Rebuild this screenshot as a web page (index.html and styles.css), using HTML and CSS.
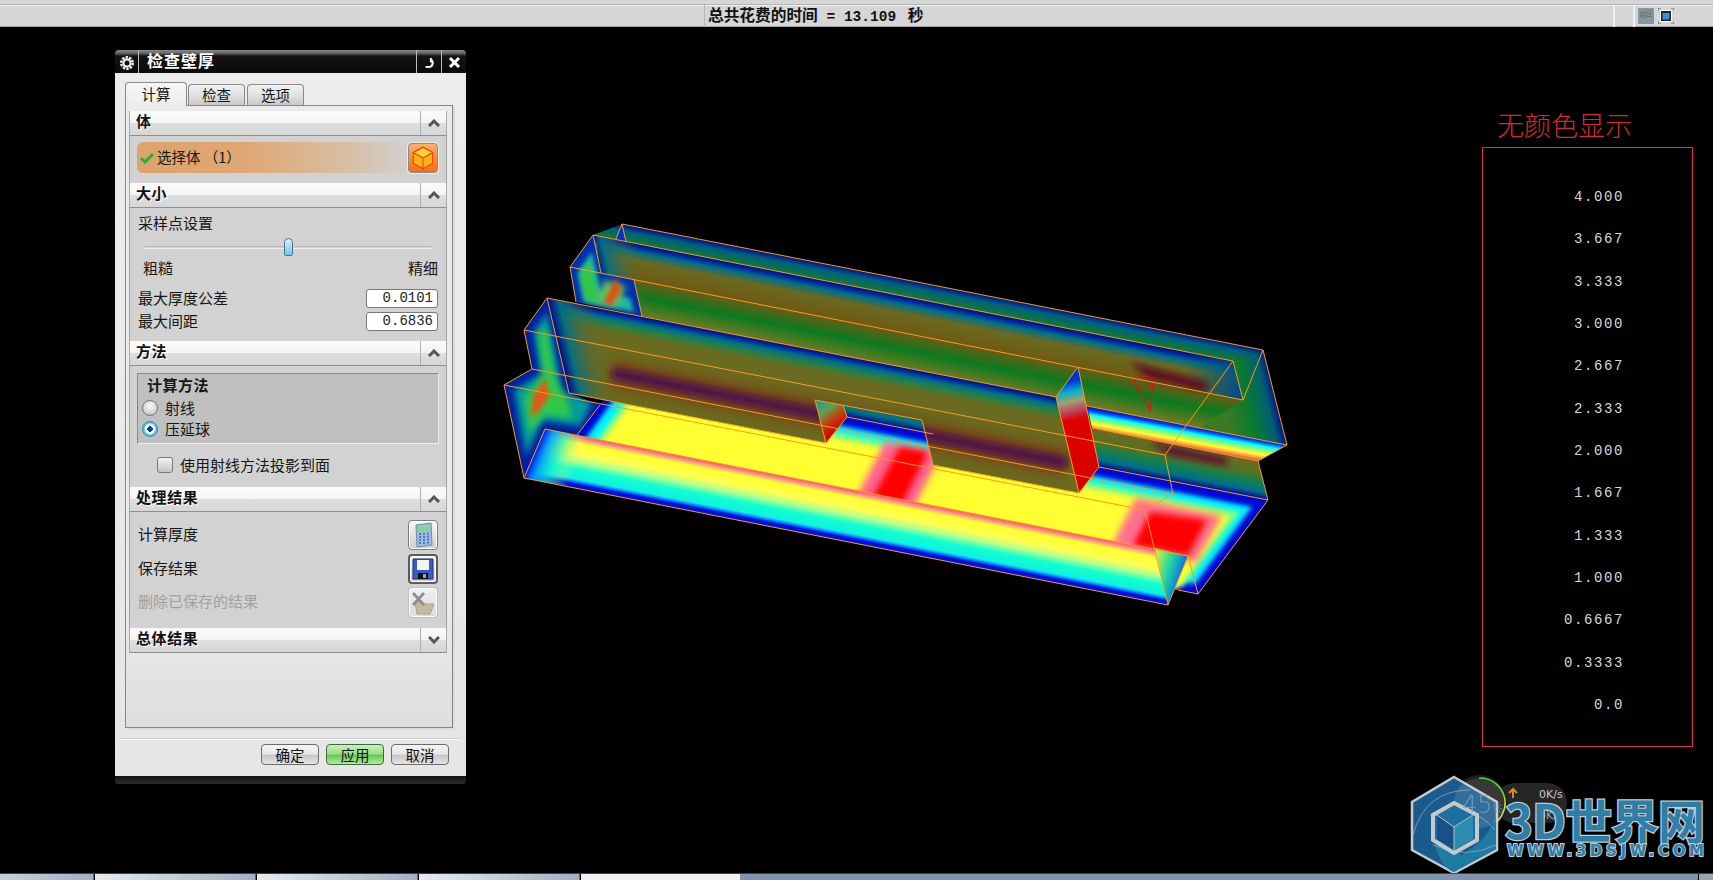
FILE: index.html
```html
<!DOCTYPE html>
<html lang="zh">
<head>
<meta charset="utf-8">
<title>检查壁厚</title>
<link rel="stylesheet" href="styles.css">
</head>
<body>
<header class="topbar">
  <div class="topbar-line"></div>
  <div class="topbar-row">
    <div class="cell-left"></div>
    <div class="cell-status">总共花费的时间<span class="mono"> = 13.109 </span>秒</div>
    <div class="cell-small"></div>
    <div class="cell-icons">
      <svg class="flag" width="16" height="16" viewBox="0 0 16 16"><rect width="16" height="16" fill="#7f98a4"/><path d="M2 3 L13 2 L14 11 L4 12Z" fill="#9a9a9a"/><path d="M4 3v9M7 3v9M10 2v9M13 2v9M2 5h12M2 8h12" stroke="#666" stroke-width="1.4" stroke-dasharray="1.5 1.5"/></svg>
      <svg class="win" width="16" height="16" viewBox="0 0 16 16"><path d="M0 3V0H3M13 0H16V3M16 13V16H13M3 16H0V13" fill="none" stroke="#666"/><rect x="2" y="2" width="12" height="12" fill="#fff"/><rect x="3" y="3" width="10" height="10" fill="#222"/><rect x="4.500" y="5" width="7" height="6.500" fill="#3f8ae8"/></svg>
    </div>
  </div>
</header>

<main class="viewport">
  <svg class="scene" width="1713" height="846" viewBox="0 27 1713 846">
    <defs>
      <filter id="b2" x="-30%" y="-30%" width="160%" height="160%"><feGaussianBlur stdDeviation="2"/></filter>
      <filter id="b3" x="-30%" y="-30%" width="160%" height="160%"><feGaussianBlur stdDeviation="3"/></filter>
      <filter id="b4" x="-30%" y="-30%" width="160%" height="160%"><feGaussianBlur stdDeviation="3.500"/></filter>
      <filter id="b6" x="-30%" y="-100%" width="160%" height="300%"><feGaussianBlur stdDeviation="6"/></filter>
      <linearGradient id="gBack" gradientUnits="userSpaceOnUse" x1="622" y1="224" x2="618.800" y2="240.400">
        <stop offset="0" stop-color="#000a90"/><stop offset=".4" stop-color="#006080"/><stop offset="1" stop-color="#107a30"/>
      </linearGradient>
      <linearGradient id="gSecond" gradientUnits="userSpaceOnUse" x1="593" y1="235" x2="579.500" y2="303.300">
        <stop offset="0" stop-color="#000a90"/><stop offset=".05" stop-color="#0028a0"/><stop offset=".12" stop-color="#007088"/><stop offset=".24" stop-color="#6a6a20"/><stop offset=".5" stop-color="#6f5a14"/><stop offset=".75" stop-color="#0a7a20"/><stop offset="1" stop-color="#6a7a20"/>
      </linearGradient>
      <linearGradient id="gThird" gradientUnits="userSpaceOnUse" x1="547" y1="298" x2="530" y2="385.400">
        <stop offset="0" stop-color="#000a90"/><stop offset=".03" stop-color="#0020a0"/><stop offset=".09" stop-color="#007088"/><stop offset=".16" stop-color="#2a8040"/><stop offset=".24" stop-color="#6a6a20"/><stop offset="1" stop-color="#6a6a20"/>
      </linearGradient>
      <linearGradient id="gLeftNavy" gradientUnits="userSpaceOnUse" x1="557" y1="340" x2="600" y2="330">
        <stop offset="0" stop-color="#000a90"/><stop offset=".25" stop-color="#007088" stop-opacity=".9"/><stop offset="1" stop-color="#6a6a20" stop-opacity="0"/>
      </linearGradient>
      <linearGradient id="gLeftNavy2" gradientUnits="userSpaceOnUse" x1="600" y1="280" x2="643" y2="270">
        <stop offset="0" stop-color="#000a90"/><stop offset=".25" stop-color="#007088" stop-opacity=".9"/><stop offset="1" stop-color="#6a6a20" stop-opacity="0"/>
      </linearGradient>
      <linearGradient id="gEndRight" gradientUnits="userSpaceOnUse" x1="1225" y1="407" x2="1276" y2="395">
        <stop offset="0" stop-color="#3a7a20"/><stop offset=".45" stop-color="#0a7a30"/><stop offset=".8" stop-color="#006070"/><stop offset="1" stop-color="#00108a"/>
      </linearGradient>
      <linearGradient id="gEndLeft" gradientUnits="userSpaceOnUse" x1="1185" y1="370" x2="1240" y2="380">
        <stop offset="0" stop-color="#006070" stop-opacity="0"/><stop offset="1" stop-color="#00508a"/>
      </linearGradient>
      <linearGradient id="gStrip" gradientUnits="userSpaceOnUse" x1="1087" y1="406" x2="1083" y2="428">
        <stop offset="0" stop-color="#0008b0"/><stop offset=".18" stop-color="#0040ff"/><stop offset=".36" stop-color="#00ffff"/><stop offset=".55" stop-color="#90ff70"/><stop offset=".75" stop-color="#ffff30"/><stop offset=".92" stop-color="#ff9040"/><stop offset="1" stop-color="#ff5060"/>
      </linearGradient>
      <linearGradient id="gMid" gradientUnits="userSpaceOnUse" x1="1092" y1="428" x2="1084.600" y2="465.500">
        <stop offset="0" stop-color="#6a6a20"/><stop offset=".3" stop-color="#5a7020"/><stop offset=".55" stop-color="#108050"/><stop offset=".78" stop-color="#007088"/><stop offset=".94" stop-color="#001898"/><stop offset="1" stop-color="#000a90"/>
      </linearGradient>
      <linearGradient id="gFront" gradientUnits="userSpaceOnUse" x1="545" y1="429" x2="535.720" y2="476">
        <stop offset="0" stop-color="#ff4a70"/><stop offset=".07" stop-color="#ff9090"/><stop offset=".16" stop-color="#ffff30"/><stop offset=".38" stop-color="#ffff50"/><stop offset=".54" stop-color="#b0ff90"/><stop offset=".7" stop-color="#10ffd0"/><stop offset=".9" stop-color="#10f0e0"/><stop offset=".95" stop-color="#0090ff"/><stop offset="1" stop-color="#0010e0"/>
      </linearGradient>
      <linearGradient id="gFrontLeft" gradientUnits="userSpaceOnUse" x1="535" y1="453" x2="575" y2="470">
        <stop offset="0" stop-color="#0020f0"/><stop offset=".2" stop-color="#00a0ff" stop-opacity=".95"/><stop offset=".5" stop-color="#10f0d0" stop-opacity=".7"/><stop offset="1" stop-color="#ffff50" stop-opacity="0"/>
      </linearGradient>
      <linearGradient id="gCapFront" gradientUnits="userSpaceOnUse" x1="1155" y1="560" x2="1188" y2="570">
        <stop offset="0" stop-color="#c0f050"/><stop offset=".45" stop-color="#20d8a0"/><stop offset="1" stop-color="#0050ff"/>
      </linearGradient>
      <linearGradient id="gEndThird" gradientUnits="userSpaceOnUse" x1="1067" y1="382" x2="1089" y2="480">
        <stop offset="0" stop-color="#0030e0"/><stop offset=".1" stop-color="#00b0d0"/><stop offset=".2" stop-color="#a0a070"/><stop offset=".3" stop-color="#c04060"/><stop offset=".38" stop-color="#e00000"/><stop offset="1" stop-color="#d80000"/>
      </linearGradient>
      <linearGradient id="gNotch" gradientUnits="userSpaceOnUse" x1="818" y1="400" x2="840" y2="430">
        <stop offset="0" stop-color="#10a0a0"/><stop offset=".35" stop-color="#60a050"/><stop offset=".65" stop-color="#c04010"/><stop offset="1" stop-color="#d00000"/>
      </linearGradient>
      <clipPath id="cSecond"><polygon points="593,235 1233,361 1263,350 1287,445 1087,406 642,316 634,280 601,273"/></clipPath>
      <clipPath id="cCap2"><polygon points="570,267 593,235 601,273 634,280 642,316 576,302"/></clipPath>
      <clipPath id="cCap3"><polygon points="547,298 524,330 532,369 504,385 524,478 545,429 577,435 600,405 569,393"/></clipPath>
      <clipPath id="cMid"><polygon points="700,351 1258,461 1268,500 700,388"/></clipPath>
      <clipPath id="cFloor"><polygon points="623,373 1268,500 1198,594 554,467"/></clipPath>
      <clipPath id="cThird"><polygon points="547,298 1056,397 1079,493 933,465 922,420 815,400 826,443 569,393"/></clipPath>
    </defs>

    <polygon points="622,224 1263,350 1233,361 593,235" fill="url(#gBack)"/>
    <polygon points="622,224 616,239 626,242" fill="#0030d0"/>

    <polygon points="593,235 1233,361 1243,400 1287,445 1087,406 642,316 634,280 601,273" fill="url(#gSecond)"/>
    <g clip-path="url(#cSecond)">
      <polygon points="596,236 646,246 654,322 604,312" fill="url(#gLeftNavy2)"/>
      <polygon points="1180,351 1233,361 1243,400 1190,390" fill="url(#gEndLeft)"/>
      <polygon points="1130,362 1207,382 1207,392 1147,378" fill="#5f0820" filter="url(#b3)"/>
    </g>
    <polygon points="1233,361 1263,350 1287,445 1200,428 1243,400" fill="url(#gEndRight)"/>

    <polygon points="570,267 593,235 601,273 634,280 642,316 576,302" fill="#0030b0"/>
    <g clip-path="url(#cCap2)">
      <polygon points="578,272 592,252 600,290 630,298 634,312 584,302" fill="#20b8a0" filter="url(#b2)"/>
      <polygon points="580,276 590,262 597,292 602,304 586,300" fill="#30c840" filter="url(#b3)"/>
      <polygon points="604,280 626,286 618,306 596,302" fill="#60c060" filter="url(#b3)"/>
      <polygon points="616,278 621,290 611,306 604,302" fill="#e05010" filter="url(#b2)"/>
    </g>

    <polygon points="1087,406 1287,445 1258,461 1092,428" fill="url(#gStrip)"/>
    <polygon points="700,351 1258,461 1268,500 700,388" fill="url(#gMid)"/>
    <g clip-path="url(#cMid)">
      <polygon points="1150,442 1227,458 1227,466 1170,455" fill="#5a0a30" filter="url(#b3)"/>
    </g>

    <polygon points="623,373 1268,500 1198,594 554,467" fill="#0008d8"/>
    <g clip-path="url(#cFloor)">
      <polygon points="626,383 1252,507 1195,584 570,460" fill="#00f0ff" filter="url(#b2)"/>
      <polygon points="632,392 1240,512 1183,587 576,468" fill="#80ff80" filter="url(#b2)"/>
      <polygon points="634,399 1230,516 1176,590 580,472" fill="#ffff33" filter="url(#b2)"/>
      <polygon points="1136,498 1222,516 1196,562 1112,545" fill="#ff7090" filter="url(#b4)"/>
      <polygon points="1150,512 1207,520 1188,556 1133,545" fill="#ff0000" filter="url(#b3)"/>
      <polygon points="885,442 942,452 912,510 856,498" fill="#ff6090" filter="url(#b4)"/>
      <polygon points="900,447 928,452 902,504 872,498" fill="#ff0000" filter="url(#b3)"/>
    </g>

    <polygon points="547,298 1056,397 1079,493 933,465 922,420 815,400 826,443 569,393" fill="url(#gThird)"/>
    <g clip-path="url(#cThird)">
      <polygon points="547,298 607,310 629,400 569,393" fill="url(#gLeftNavy)"/>
      <line x1="612" y1="373" x2="1067" y2="463" stroke="#7a4012" stroke-width="26" filter="url(#b6)"/>
      <line x1="612" y1="373" x2="1067" y2="463" stroke="#4a0a50" stroke-width="10" filter="url(#b4)"/>
    </g>
    <polygon points="815,400 843,405 847,417 826,443" fill="url(#gNotch)"/>
    <polygon points="1056,397 1078,367 1099,467 1079,493" fill="url(#gEndThird)"/>

    <polygon points="547,298 524,330 532,369 504,385 524,478 545,429 577,435 600,405 569,393" fill="#0020a0"/>
    <g clip-path="url(#cCap3)">
      <polygon points="547,312 534,332 541,374 514,390 526,456 542,420 580,426 592,402 562,392" fill="#009c9c" filter="url(#b3)"/>
      <polygon points="546,326 538,336 544,374 524,398 529,434 545,415 572,418 568,402 556,380" fill="#30c848" filter="url(#b3)"/>
      <polygon points="545,378 533,396 531,418 540,410 550,395" fill="#e05a18" filter="url(#b2)"/>
    </g>

    <polygon points="545,429 1188,556 1168,605 524,478" fill="url(#gFront)"/>
    <polygon points="545,429 595,439 574,488 524,478" fill="url(#gFrontLeft)"/>
    <polygon points="1155,548 1188,556 1168,605" fill="url(#gCapFront)"/>

    <ellipse cx="1144" cy="382" rx="9.500" ry="6" fill="none" stroke="#e01010" stroke-width="1.200"/>
    <path d="M1135 385 L1150 410 L1153 382" fill="none" stroke="#e01010" stroke-width="1.200"/>

    <path class="wire" d="M622 224L1263 350M593 235L1233 361M570 267L1243 400M547 298L1056 397M524 330L1165 455M532 369L1173 494M504 385L1145 510M545 429L1188 556M524 478L1168 605M569 393L826 443M933 465L1079 493M1087 406L1287 445M1092 428L1258 461M847 417L933 434M1099 467L1268 500M815 400L922 420M815 400L826 443M922 420L933 465M847 417L843 405M847 417L826 443M1056 397L1078 367L1099 467L1079 493L1056 397M622 224L616 239M622 224L626 242M593 235L570 267L576 302M593 235L601 273M634 280L642 316M547 298L524 330L532 369L504 385L524 478L545 429M547 298L569 393M577 435L600 405M1233 361L1243 400L1263 350L1287 445L1258 461L1268 500L1198 594L1178 590M1233 361L1165 455L1173 494L1145 510L1168 605L1188 556L1198 594"/>
  </svg>

  <section class="dialog">
    <div class="titlebar">
      <div class="tb-cell tb-gear">
        <svg width="14" height="14" viewBox="0 0 14 14"><circle cx="7" cy="7" r="5.800" fill="none" stroke="#eee" stroke-width="2.400" stroke-dasharray="2.400 1.200"/><circle cx="7" cy="7" r="3.600" fill="none" stroke="#eee" stroke-width="2.200"/></svg>
      </div>
      <div class="tb-title">检查壁厚</div>
      <div class="tb-cell tb-btn">
        <svg width="12" height="12" viewBox="0 0 12 12"><path d="M2.500 10 H6.500 A4 4 0 0 0 8 2.800 M8 1 V5.500" fill="none" stroke="#eee" stroke-width="2.200"/></svg>
      </div>
      <div class="tb-cell tb-btn">
        <svg width="13" height="13" viewBox="0 0 13 13"><path d="M2 2 L11 11 M11 2 L2 11" stroke="#fff" stroke-width="3"/></svg>
      </div>
    </div>

    <div class="dialog-body">
      <div class="tabs">
        <div class="tab tab-active">计算</div>
        <div class="tab">检查</div>
        <div class="tab">选项</div>
      </div>

      <div class="panel">
        <div class="sec-head"><span class="sec-title">体</span><span class="sec-toggle"><svg class="chev" width="12" height="8" viewBox="0 0 12 8"><path d="M1 7 L6 2 L11 7" fill="none" stroke="#555" stroke-width="3"/></svg></span></div>
        <div class="sec-body body-select">
          <div class="select-row">
            <svg width="14" height="12" viewBox="0 0 14 12"><path d="M1 6 L5 10 L13 2" fill="none" stroke="#19b82e" stroke-width="3"/></svg>
            <span class="select-text">选择体 （1）</span>
            <span class="cube-btn">
              <svg width="26" height="26" viewBox="0 0 24 24"><path d="M12 2 L21 7 V17 L12 22 L3 17 V7Z" fill="#ffb414" stroke="#e04800"/><path d="M3 7 L12 12 L21 7 M12 12 V22" fill="none" stroke="#e04800"/><path d="M12 2 L21 7 L12 12 L3 7Z" fill="#ffd23c" stroke="#e04800"/></svg>
            </span>
          </div>
        </div>

        <div class="sec-head"><span class="sec-title">大小</span><span class="sec-toggle"><svg class="chev" width="12" height="8" viewBox="0 0 12 8"><path d="M1 7 L6 2 L11 7" fill="none" stroke="#555" stroke-width="3"/></svg></span></div>
        <div class="sec-body body-size">
          <div class="text-line">采样点设置</div>
          <div class="slider"><span class="track"></span><span class="thumb"></span></div>
          <div class="ticks"><span>粗糙</span><span>精细</span></div>
          <div class="field first"><span>最大厚度公差</span><span class="input">0.0101</span></div>
          <div class="field"><span>最大间距</span><span class="input">0.6836</span></div>
        </div>

        <div class="sec-head"><span class="sec-title">方法</span><span class="sec-toggle"><svg class="chev" width="12" height="8" viewBox="0 0 12 8"><path d="M1 7 L6 2 L11 7" fill="none" stroke="#555" stroke-width="3"/></svg></span></div>
        <div class="sec-body body-method">
          <div class="group">
            <div class="group-title">计算方法</div>
            <div class="radio-row"><span class="radio"></span>射线</div>
            <div class="radio-row"><span class="radio radio-on"></span>压延球</div>
          </div>
          <div class="check-row"><span class="check"></span>使用射线方法投影到面</div>
        </div>

        <div class="sec-head"><span class="sec-title">处理结果</span><span class="sec-toggle"><svg class="chev" width="12" height="8" viewBox="0 0 12 8"><path d="M1 7 L6 2 L11 7" fill="none" stroke="#555" stroke-width="3"/></svg></span></div>
        <div class="sec-body body-result">
          <div class="action">计算厚度
            <span class="icon-btn"><svg width="24" height="26" viewBox="0 0 24 26"><path d="M5 3 L20 1 L21 23 L6 25Z" fill="#9cc0d8" stroke="#6b8ca8"/><path d="M7 5 L18 3.500 V8 L7 9.500Z" fill="#7fd890"/><path d="M8 12h2M12 12h2M16 11.500h2M8 15h2M12 15h2M16 14.500h2M8 18h2M12 18h2M16 17.500h2M8 21h2M12 21h2M16 20.500h2" stroke="#5a70d0" stroke-width="2"/></svg></span>
          </div>
          <div class="action">保存结果
            <span class="icon-btn icon-btn-dark"><svg width="24" height="24" viewBox="0 0 24 24"><path d="M2 2 H22 V22 H2Z" fill="#3a5cc8" stroke="#1c2c70"/><rect x="6" y="3" width="12" height="10" fill="#f4f4f4"/><rect x="7" y="16" width="10" height="6" fill="#111"/><rect x="12" y="17" width="3" height="4" fill="#8aa0e0"/></svg></span>
          </div>
          <div class="action action-off">删除已保存的结果
            <span class="icon-btn icon-btn-off"><svg width="26" height="24" viewBox="0 0 26 24"><path d="M5 11 H11 L13 13 H24 L20 23 H7Z" fill="#c0bc9c" stroke="#a8a488"/><path d="M3 2 L14 14 M14 2 L3 14" stroke="#8c8c8c" stroke-width="2.600"/></svg></span>
          </div>
        </div>

        <div class="sec-head"><span class="sec-title">总体结果</span><span class="sec-toggle"><svg class="chev" width="12" height="8" viewBox="0 0 12 8"><path d="M1 1 L6 6 L11 1" fill="none" stroke="#555" stroke-width="3"/></svg></span></div>
      </div>

      <div class="dialog-rule"></div>
      <div class="dialog-actions">
        <button class="btn">确定</button>
        <button class="btn btn-green">应用</button>
        <button class="btn">取消</button>
      </div>
    </div>
    <div class="dialog-foot"></div>
  </section>

  <aside class="legend">
    <div class="legend-title">无颜色显示</div>
    <div class="legend-box">
      <div>4.000</div><div>3.667</div><div>3.333</div><div>3.000</div><div>2.667</div><div>2.333</div><div>2.000</div><div>1.667</div><div>1.333</div><div>1.000</div><div>0.6667</div><div>0.3333</div><div>0.0</div>
    </div>
  </aside>

  <svg class="watermark" width="313" height="103" viewBox="1400 770 313 103">
    <defs>
      <linearGradient id="gArc" x1="0" y1="0" x2="0" y2="1"><stop offset="0" stop-color="#30e020"/><stop offset=".6" stop-color="#c8e020"/><stop offset="1" stop-color="#e8e8c0"/></linearGradient>
    </defs>
    <rect x="1495" y="783" width="72" height="40" rx="20" fill="#262626"/>
    <circle cx="1479" cy="803" r="28" fill="#1c1c1c"/>
    <path d="M1479 778 A25 25 0 0 1 1487 827" fill="none" stroke="url(#gArc)" stroke-width="1.600"/>
    <path d="M1513 798 V790 M1509 793 L1513 789 L1517 793" fill="none" stroke="#d88a20" stroke-width="2"/>
    <text class="wm-speed" x="1539" y="798">0K/s</text>
    <polygon points="1454,777 1497,802 1497,850 1454,873 1412,850 1412,802" fill="#1b5a8c" stroke="#c4c9ce" stroke-width="2.500"/>
    <path d="M1433 838 Q1440 868 1454 872 L1496 849 V815 Q1490 838 1462 855Z" fill="#1f7ba2"/>
    <path d="M1413 835 Q1425 790 1470 790 M1430 815 Q1470 800 1495 830 M1433 845 Q1465 860 1496 845" fill="none" stroke="#8fb6cf" stroke-width=".7"/>
    <circle cx="1479" cy="803" r="25" fill="#ffffff" opacity=".12"/>
    <polygon points="1454,803 1477,815 1477,840 1454,853 1433,840 1433,815" fill="#1f6ea0" stroke="#c4c9ce" stroke-width="4"/>
    <polygon points="1454,827 1473,816 1473,839 1454,850" fill="#2a8db0"/>
    <polygon points="1454,827 1437,816 1437,839 1454,850" fill="#1a5088"/>
    <path d="M1437 815 L1454 827 L1473 815 M1454 827 V851" fill="none" stroke="#b8c0c8" stroke-width="1"/>
    <text class="wm-pct" x="1462" y="813">45<tspan class="wm-pct-small">%</tspan></text>
    <text class="wm-speed wm-speed-b" x="1539" y="819">0K/s</text>
    <text class="wm-name" x="1505" y="839" textLength="200" lengthAdjust="spacing">3D世界网</text>
    <text class="wm-url" x="1507" y="856" textLength="197" lengthAdjust="spacing">WWW.3DSJW.COM</text>
  </svg>
</main>

<footer class="taskbar">
  <div class="task task-first"></div>
  <div class="task"></div>
  <div class="task"></div>
  <div class="task"></div>
  <div class="task task-active"></div>
  <div class="task-rest"></div>
  <div class="task-end"></div>
</footer>
</body>
</html>
```
FILE: styles.css
```css
* { box-sizing: border-box; }
html, body { margin: 0; height: 100%; }
body {
  width: 1713px;
  height: 880px;
  display: flex;
  flex-direction: column;
  background: #000;
  overflow: hidden;
  font-family: "Noto Sans CJK SC", "Liberation Sans", sans-serif;
  font-size: 15px;
  color: #161616;
}

/* top status bar */
.topbar { height: 27px; background: #d6d6d6; border-bottom: 1px solid #a4a4a4; display: flex; flex-direction: column; flex: none; }
.topbar-line { height: 5px; border-bottom: 1px solid #b4b4b4; box-shadow: 0 1px 0 #efefef; flex: none; }
.topbar-row { flex: 1; display: flex; }
.cell-left { width: 705px; border-right: 1px solid #b8b8b8; }
.cell-status { width: 910px; padding-left: 3px; font-size: 15.700px; font-weight: 700; line-height: 19px; color: #111; border-right: 2px solid #f0f0f0; white-space: pre; }
.mono { font-family: "Liberation Mono", monospace; font-size: 14.500px; margin-right: 3px; }
.cell-small { width: 20px; border-right: 2px solid #f0f0f0; }
.cell-icons { flex: 1; display: flex; gap: 4px; padding: 3px 0 0 3px; align-items: flex-start; }

/* viewport */
.viewport { flex: 1; position: relative; min-height: 0; }
.scene { position: absolute; left: 0; top: 0; display: block; }
.wire { fill: none; stroke: #ff9a14; stroke-width: 1; }

/* dialog */
.dialog { position: absolute; left: 115px; top: 23px; width: 351px; display: flex; flex-direction: column; }
.titlebar {
  height: 23px; display: flex; align-items: stretch;
  background: linear-gradient(#8a8a8a 0, #6a6a6a 3px, #141414 6px, #0a0a0a 100%);
  border-radius: 4px 4px 0 0;
}
.tb-cell { display: flex; align-items: center; justify-content: center; padding-top: 2px; }
.tb-gear { width: 24px; border-right: 1px solid #bbb; }
.tb-title { flex: 1; padding-left: 8px; color: #fff; font-size: 16px; font-weight: 700; line-height: 20px; letter-spacing: 1px; }
.tb-btn { width: 25px; border-left: 1px solid #bbb; }
.dialog-body { height: 703px; background: linear-gradient(#ececec, #e6e6e6); padding: 9px 13px 0 10px; display: flex; flex-direction: column; }
.dialog-foot { height: 8px; background: linear-gradient(#111, #2e2e2e); border-radius: 0 0 3px 3px; }

.tabs { display: flex; align-items: flex-end; height: 23px; gap: 2px; position: relative; z-index: 1; }
.tab {
  width: 57px; height: 21px; text-align: center; line-height: 20px; font-size: 14.500px;
  border: 1px solid #8a8a8a; border-bottom: 0; border-radius: 4px 4px 0 0;
  background: linear-gradient(#f0f0f0, #e2e2e2 50%, #c8c8c8);
}
.tab-active { width: 62px; height: 24px; margin-bottom: -1px; margin-right: -1px; background: linear-gradient(#f6f6f6, #ececec); line-height: 22px; }

.panel {
  height: 623px; padding: 5px 5px 0 3px; flex: none;
  border: 1px solid #868686;
  background: linear-gradient(#ebebeb 80%, #dedede);
  box-shadow: 2px 2px 0 #dcdcdc;
}
.sec-head {
  height: 25px; display: flex; justify-content: space-between; align-items: stretch;
  background: linear-gradient(#fafafa 0, #f4f4f4 50%, #dcdfe0 52%, #d6d6d6 100%);
  border-bottom: 1px solid #8e8e8e;
  border-left: 1px solid #aaa; border-right: 1px solid #aaa;
}
.sec-title { padding-left: 6px; font-size: 15px; font-weight: 700; line-height: 20px; letter-spacing: .6px; color: #111; text-shadow: 1px 1px 0 #fff; }
.sec-toggle { width: 26px; border-left: 1px solid #b0b0b0; display: flex; align-items: center; justify-content: center; }
.sec-body { background: #d2d2d2; border-left: 1px solid #a0a0a0; border-right: 1px solid #a0a0a0; }

.body-select { height: 47px; padding: 6px 8px 0 7px; }
.select-row {
  height: 31px; display: flex; align-items: center; padding-left: 3px; gap: 4px;
  background: linear-gradient(90deg, #dea36c 0, #dfa772 35%, #d8bea4 70%, #d2d2d2 92%);
  border-radius: 6px 0 0 6px;
}
.select-text { font-size: 14.500px; flex: 1; padding-bottom: 2px; margin-left: -1px; }
.cube-btn {
  width: 30px; height: 30px; display: flex; align-items: center; justify-content: center;
  border: 1px solid #8a8a8a; border-radius: 4px;
  background: linear-gradient(#ffb070, #ff6a10);
  box-shadow: 0 0 0 1px #eee;
}

.body-size { height: 133px; padding: 6px 8px 0; }
.text-line { height: 20px; line-height: 18px; }
.slider { height: 18px; margin-top: 4px; position: relative; }
.track { position: absolute; left: 6px; right: 6px; top: 8px; height: 3px; background: linear-gradient(#aaa, #fff); border-radius: 2px; }
.thumb {
  position: absolute; left: 146px; top: 0; width: 9px; height: 18px;
  border: 1px solid #50707c; border-radius: 5px 5px 2px 2px;
  background: linear-gradient(#d8f2fc, #6cc8ee);
}
.ticks { display: flex; justify-content: space-between; height: 18px; line-height: 15px; margin-top: 4px; padding-left: 5px; }
.field { display: flex; justify-content: space-between; align-items: center; height: 19px; margin-top: 4px; padding-bottom: 2px; }
.field.first { margin-top: 11px; }
.input {
  width: 72px; height: 19px; margin-bottom: -2px; background: #fff; text-align: right; padding-right: 4px;
  border: 1px solid #777; border-radius: 3px;
  font-family: "Liberation Mono", monospace; font-size: 14px; line-height: 17px; color: #222;
}

.body-method { height: 121px; padding: 7px 7px 0 7px; }
.group {
  height: 71px; background: #c0c0c0;
  border: 1px solid #f0f0f0; border-top-color: #8a8a8a; border-left-color: #8a8a8a;
}
.group-title { height: 22px; line-height: 22px; padding-left: 9px; font-weight: 700; letter-spacing: .5px; }
.radio-row { height: 21px; display: flex; align-items: center; gap: 7px; padding: 0 0 3px 4px; }
.group-title + .radio-row { margin-top: 2px; }
.radio { width: 16px; height: 16px; margin-bottom: -2px; border-radius: 50%; border: 1px solid #777; background: radial-gradient(circle at 50% 35%, #fafafa, #cfcfcf 70%, #aaa); }
.radio-on { border-color: #3a8ab0; background: radial-gradient(circle, #0a3fa0 0, #0a3fa0 26%, #fff 30%, #fff 45%, #5fc4ee 60%, #2a9ad0 100%); }
.check-row { height: 20px; margin-top: 11px; padding: 0 0 2px 20px; display: flex; align-items: center; gap: 7px; }
.check { width: 16px; height: 16px; margin-bottom: -2px; border: 1px solid #777; border-radius: 3px; background: linear-gradient(#f4f4f4, #c4c4c4); }

.body-result { height: 116px; padding: 8px 8px 0; display: flex; flex-direction: column; gap: 4px; }
.action { display: flex; justify-content: space-between; align-items: center; height: 30px; padding-bottom: 4px; }
.action-off { color: #a0a0a0; margin-top: -1px; height: 31px; }
.icon-btn {
  width: 30px; height: 30px; margin-bottom: -4px; flex: none; display: flex; align-items: center; justify-content: center;
  border: 1px solid #7c7c7c; border-radius: 4px; background: linear-gradient(#f6f6f6, #cfcfcf);
  box-shadow: inset 0 0 0 1px #fff;
}
.icon-btn-dark { border: 2px solid #5c5c5c; }
.icon-btn-off { border-color: #bcbcbc; background: linear-gradient(#f0f0f0, #dcdcdc); height: 31px; }

.dialog-rule { height: 1px; background: #cdcdcd; box-shadow: 0 1px 0 #fff; margin: 10px -8px 0 -4px; flex: none; }
.dialog-actions { display: flex; justify-content: flex-end; gap: 7px; margin-top: 5px; padding-right: 4px; }
.btn {
  width: 58px; height: 21px; padding: 0; font: inherit; font-size: 14.500px; line-height: 17px; color: #111;
  border: 1px solid #6c6c6c; border-radius: 4px;
  background: linear-gradient(#f4f4f4 0, #e8e8e8 45%, #c8c8c8 55%, #e4e4e4 100%);
}
.btn-green { border-color: #3c6c3c; background: linear-gradient(#c8f0b8 0, #9ce088 45%, #66c858 55%, #b4ec9c 100%); }

/* legend */
.legend { position: absolute; left: 1482px; top: 83px; width: 211px; display: flex; flex-direction: column; }
.legend-title { height: 37px; padding-left: 15px; font-size: 27px; line-height: 29px; color: #d82a2a; font-weight: 300; white-space: nowrap; }
.legend-box {
  height: 600px; border: 1px solid #e03434; padding: 28px 68px 0 0;
  display: flex; flex-direction: column; align-items: flex-end;
  font-family: "Liberation Mono", monospace; font-size: 14px; letter-spacing: 1.600px; line-height: 42.330px; color: #d8d8d8;
}

/* watermark */
.watermark { position: absolute; left: 1400px; top: 743px; display: block; }
.wm-speed { font-family: "DejaVu Sans", sans-serif; font-size: 11px; fill: #c8c8c8; }
.wm-speed-b { fill: #78b4d4; }
.wm-pct { font-family: "DejaVu Sans", sans-serif; font-size: 24px; font-weight: 200; fill: #6fb0dc; opacity: .75; }
.wm-pct-small { font-size: 12px; }
.wm-name { font-family: "Noto Sans CJK SC", sans-serif; font-weight: 700; font-size: 47px; fill: #2d7fa8; stroke: #c6ccd2; stroke-width: 2.500px; paint-order: stroke; }
.wm-url { font-family: "DejaVu Sans", sans-serif; font-weight: 700; font-size: 15px; fill: #2d7fa8; stroke: #c6ccd2; stroke-width: 2px; paint-order: stroke; }

/* task bar */
.taskbar { height: 7px; flex: none; display: flex; border-top: 1px solid #3c4450; background: #000; gap: 1px; }
.task { width: 161px; background: linear-gradient(90deg, #e6ebef, #a2b0c2); border-right: 1px solid #5a6a80; }
.task-first { width: 94px; background: linear-gradient(90deg, #c6d0da, #a2b0c2); }
.task-active { width: 159px; background: #eef0f2; border-right: 0; }
.task-rest { flex: 1; background: #8094ae; margin-left: -1px; }
.task-end { width: 14px; background: #9aa4b0; }
```
